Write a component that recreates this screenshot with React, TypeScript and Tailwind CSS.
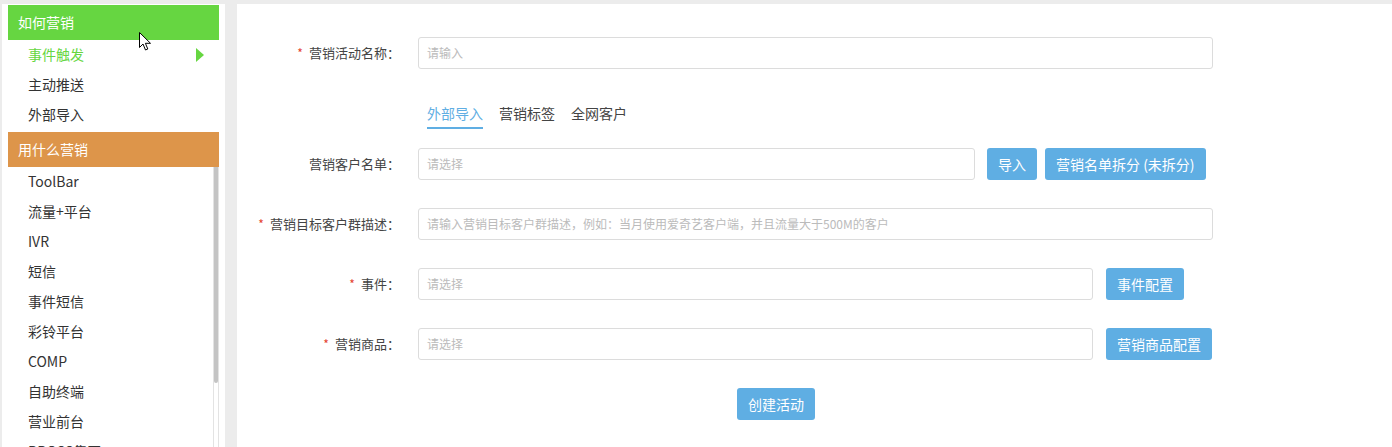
const font = "font-['Noto_Sans_CJK_SC','Noto_Sans',sans-serif]";

const howItems = ["事件触发", "主动推送", "外部导入"];
const whatItems = [
  "ToolBar",
  "流量+平台",
  "IVR",
  "短信",
  "事件短信",
  "彩铃平台",
  "COMP",
  "自助终端",
  "营业前台",
  "BBOSS集团",
];

const Cursor = () => (
  <svg
    className="absolute left-[137px] top-[28px]"
    width="13"
    height="19"
    viewBox="0 0 13 19"
  >
    <path
      d="M0.5 0.5 L0.5 15.5 L4 12 L6.5 18 L8.8 17 L6.4 11.3 L11.5 11.3 Z"
      fill="#fff"
      stroke="#000"
      strokeWidth="1"
      strokeLinejoin="miter"
    />
  </svg>
);

const Sidebar = () => (
  <div className="relative ml-[2px] flex w-[223px] flex-col bg-white pt-[1px]">
    {/* 如何营销 */}
    <div className="ml-[6px] flex h-[35px] w-[211px] items-center bg-[#66d641] pb-[1px] pl-[10px] text-[14px] text-white">
      如何营销
    </div>
    {howItems.map((item, i) => (
      <div
        key={item}
        className={`ml-[6px] flex h-[30px] w-[211px] items-center justify-between pb-[2px] pl-[20px] pr-[15px] text-[14px] ${
          i === 0 ? "text-[#66d641]" : "text-[#333]"
        }`}
      >
        <span>{item}</span>
        {i === 0 && (
          <svg width="8" height="14" viewBox="0 0 8 14" className="mt-[2px]">
            <path d="M0 0 L8 7 L0 14 Z" fill="#66d641" />
          </svg>
        )}
      </div>
    ))}

    {/* 用什么营销 */}
    <div className="ml-[6px] mt-[2px] flex h-[35px] w-[211px] items-center bg-[#dd954a] pb-[1px] pl-[10px] text-[14px] text-white">
      用什么营销
    </div>
    <div className="ml-[6px] flex min-h-0 w-[211px] flex-1 overflow-hidden">
      <div className="flex-1 pl-[20px]">
        {whatItems.map((item) => (
          <div key={item} className="flex h-[30px] items-center pb-[2px] text-[14px] text-[#333]">
            {item}
          </div>
        ))}
      </div>
      <div className="w-[6px] border-x border-[#e3e3e3] bg-white">
        <div className="h-[216px] rounded-b-[2px] bg-[#c4c4c4]" />
      </div>
    </div>
    <Cursor />
  </div>
);

interface RowProps {
  label: string;
  required?: boolean;
  placeholder: string;
  width: string;
  children?: React.ReactNode;
}

const FormRow = ({ label, required, placeholder, width, children }: RowProps) => (
  <div className="flex h-8 items-center">
    <div className="flex w-[163px] items-center justify-end text-[13px] text-[#444]">
      {required && <span className="mr-[6px] text-[12px] text-[#e4432d]">*</span>}
      {label}：
    </div>
    <div
      className={`ml-[18px] flex h-8 items-center rounded-[3px] border border-[#dcdcdc] px-2 text-[12px] text-[#bbb] ${width}`}
    >
      {placeholder}
    </div>
    {children}
  </div>
);

const Btn = ({ children, className = "" }: { children: React.ReactNode; className?: string }) => (
  <button
    className={`flex h-8 items-center rounded-[3px] bg-[#5faee3] px-[11px] text-[14px] text-white ${className}`}
  >
    {children}
  </button>
);

export default function App() {
  return (
    <div className={`flex h-[447px] w-[1392px] overflow-hidden bg-[#ececec] pt-[4px] ${font}`}>
      <Sidebar />
      <div className="ml-[12px] flex flex-1 flex-col bg-white pt-[33px]">
        <FormRow label="营销活动名称" required placeholder="请输入" width="w-[795px]" />

        {/* tabs */}
        <div className="ml-[190px] mt-[34px] flex gap-4 text-[14px]">
          <div className="border-b-2 border-[#5faee3] pb-[4px] leading-[20px] text-[#5faee3]">外部导入</div>
          <div className="pb-[4px] leading-[20px] text-[#444]">营销标签</div>
          <div className="pb-[4px] leading-[20px] text-[#444]">全网客户</div>
        </div>

        <div className="mt-[19px] flex flex-col gap-[28px]">
          <FormRow label="营销客户名单" placeholder="请选择" width="w-[557px]">
            <Btn className="ml-[12px]">导入</Btn>
            <Btn className="ml-[8px]">营销名单拆分 (未拆分)</Btn>
          </FormRow>
          <FormRow
            label="营销目标客户群描述"
            required
            placeholder="请输入营销目标客户群描述，例如：当月使用爱奇艺客户端，并且流量大于500M的客户"
            width="w-[795px]"
          />
          <FormRow label="事件" required placeholder="请选择" width="w-[675px]">
            <Btn className="ml-[13px]">事件配置</Btn>
          </FormRow>
          <FormRow label="营销商品" required placeholder="请选择" width="w-[675px]">
            <Btn className="ml-[13px]">营销商品配置</Btn>
          </FormRow>
          <div>
            <Btn className="ml-[500px]">创建活动</Btn>
          </div>
        </div>
      </div>
    </div>
  );
}
